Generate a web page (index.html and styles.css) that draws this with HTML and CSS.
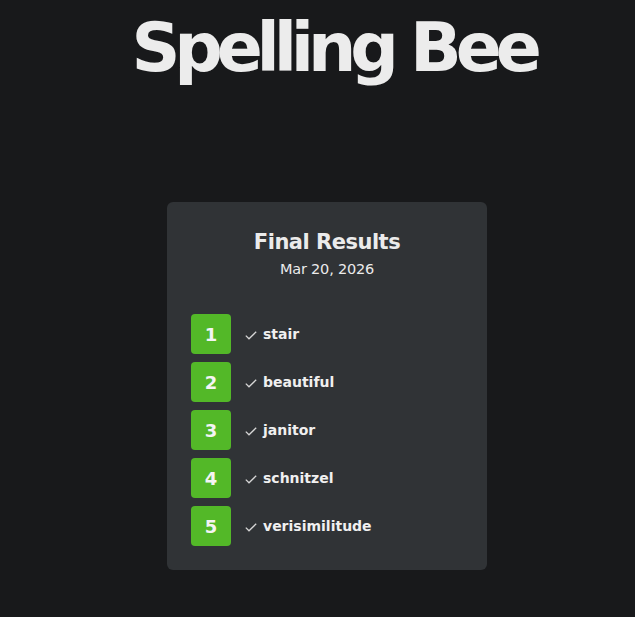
FILE: index.html
```html
<!DOCTYPE html>
<html>
<head>
<meta charset="utf-8">
<link rel="stylesheet" href="styles.css">
</head>
<body>
<header class="header">
  <h1 class="title">Spelling Bee</h1>
</header>
<main class="main">
  <section class="card">
    <h2 class="card-title">Final Results</h2>
    <div class="card-date">Mar 20, 2026</div>
    <ol class="results">
      <li class="result"><span class="num">1</span><svg class="check" viewBox="0 0 12 9"><polyline points="0.8,4.6 4,7.8 11.2,0.8"/></svg><span class="word">stair</span></li>
      <li class="result"><span class="num">2</span><svg class="check" viewBox="0 0 12 9"><polyline points="0.8,4.6 4,7.8 11.2,0.8"/></svg><span class="word">beautiful</span></li>
      <li class="result"><span class="num">3</span><svg class="check" viewBox="0 0 12 9"><polyline points="0.8,4.6 4,7.8 11.2,0.8"/></svg><span class="word">janitor</span></li>
      <li class="result"><span class="num">4</span><svg class="check" viewBox="0 0 12 9"><polyline points="0.8,4.6 4,7.8 11.2,0.8"/></svg><span class="word">schnitzel</span></li>
      <li class="result"><span class="num">5</span><svg class="check" viewBox="0 0 12 9"><polyline points="0.8,4.6 4,7.8 11.2,0.8"/></svg><span class="word">verisimilitude</span></li>
    </ol>
  </section>
</main>
</body>
</html>
```
FILE: styles.css
```css
html, body {
  margin: 0;
  padding: 0;
  background: #18191b;
  color: #ebebeb;
  font-family: "DejaVu Sans", "Liberation Sans", sans-serif;
}
.header {
  display: flex;
  justify-content: center;
  padding-left: 32px;
}
.title {
  margin: 0;
  padding-top: 8px;
  font-size: 68px;
  line-height: 80px;
  font-weight: 700;
  letter-spacing: -6.2px;
  color: #ececec;
}
.main {
  display: flex;
  justify-content: center;
  padding-top: 114px;
  padding-left: 19px;
}
.card {
  width: 320px;
  box-sizing: border-box;
  background: #303336;
  border-radius: 6px;
  padding: 26px 24px 24px;
}
.card-title {
  margin: 0;
  text-align: center;
  font-size: 21px;
  line-height: 28px;
  font-weight: 700;
  letter-spacing: -0.5px;
}
.card-date {
  text-align: center;
  font-size: 14.5px;
  line-height: 20px;
  font-weight: 400;
  letter-spacing: -0.2px;
  margin-top: 3px;
}
.results {
  list-style: none;
  margin: 35px 0 0;
  padding: 0;
  display: flex;
  flex-direction: column;
  gap: 8px;
}
.result {
  display: flex;
  align-items: center;
}
.num {
  width: 40px;
  height: 40px;
  border-radius: 4px;
  background: #53b828;
  color: #f4f4f4;
  display: flex;
  align-items: center;
  justify-content: center;
  font-size: 18px;
  font-weight: 700;
}
.check {
  margin-left: 14px;
  margin-right: 6px;
  margin-top: 3px;
  width: 12px;
  height: 9px;
  fill: none;
  stroke: #d6d6d6;
  stroke-width: 1.3;
}
.word {
  font-size: 14px;
  font-weight: 700;
  color: #f0f0f0;
}
```
